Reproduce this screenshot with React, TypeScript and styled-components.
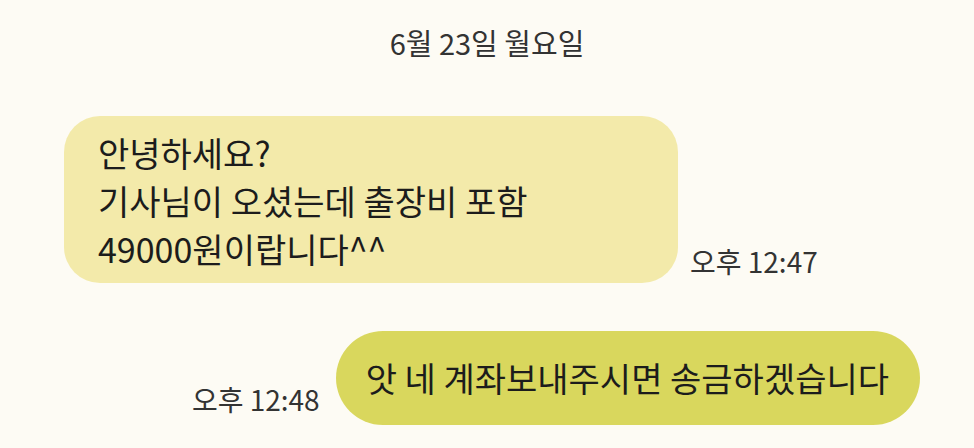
import styled, { createGlobalStyle } from "styled-components";

const GlobalStyle = createGlobalStyle`
  html, body {
    margin: 0;
    padding: 0;
    background: #fdfbf4;
  }
  body {
    font-family: "Noto Sans CJK KR", "Noto Sans", sans-serif;
    color: #222;
  }
`;

const Screen = styled.div`
  width: 974px;
  height: 448px;
  overflow: hidden;
  display: flex;
  flex-direction: column;
`;

const DateLabel = styled.div`
  text-align: center;
  font-size: 29px;
  line-height: 40px;
  color: #333;
  padding-top: 22px;
  margin-bottom: 54px;
`;

const Row = styled.div<{ mine?: boolean }>`
  display: flex;
  align-items: flex-end;
  justify-content: ${(p) => (p.mine ? "flex-end" : "flex-start")};
  gap: ${(p) => (p.mine ? "16px" : "12px")};
  padding: ${(p) => (p.mine ? "0 54px 0 0" : "0 0 0 64px")};
  margin-bottom: ${(p) => (p.mine ? "0" : "48px")};
`;

const Bubble = styled.div<{ mine?: boolean }>`
  box-sizing: border-box;
  background: ${(p) => (p.mine ? "#d9d75d" : "#f3eaaa")};
  border-radius: ${(p) => (p.mine ? "47px" : "36px")};
  font-size: 34px;
  line-height: 48px;
  color: #1c1c1c;
  ${(p) =>
    p.mine
      ? `height: 94px; padding: 0 31px 0 30px; display: flex; align-items: center;`
      : `width: 614px; padding: 13px 34px 10px;`}
`;

const Time = styled.div<{ mine?: boolean }>`
  font-size: 28px;
  line-height: 32px;
  color: #333;
  padding-bottom: ${(p) => (p.mine ? "10px" : "6px")};
  white-space: nowrap;
`;

export default function App() {
  return (
    <Screen>
      <GlobalStyle />
      <DateLabel>6월 23일 월요일</DateLabel>
      <Row>
        <Bubble>
          안녕하세요?
          <br />
          기사님이 오셨는데 출장비 포함
          <br />
          49000원이랍니다^^
        </Bubble>
        <Time>오후 12:47</Time>
      </Row>
      <Row mine>
        <Time mine>오후 12:48</Time>
        <Bubble mine>앗 네 계좌보내주시면 송금하겠습니다</Bubble>
      </Row>
    </Screen>
  );
}
